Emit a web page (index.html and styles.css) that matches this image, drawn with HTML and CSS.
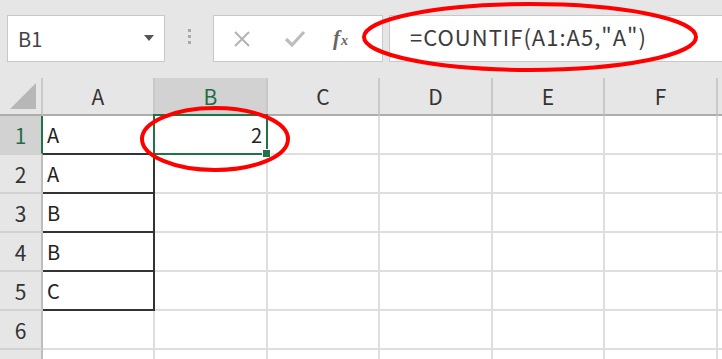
FILE: index.html
```html
<!DOCTYPE html>
<html lang="ja">
<head>
  <meta charset="UTF-8">
  <title>COUNTIF</title>
  <link rel="stylesheet" href="styles.css">
</head>
<body>
  <div class="app">
    <div class="toolbar">
      <div class="namebox">
        <span>B1</span>
        <svg class="caret" width="10" height="6" viewBox="0 0 10 6"><path d="M0 0h10L5 6z" fill="#555"/></svg>
      </div>
      <div class="dots"><i></i><i></i><i></i></div>
      <div class="fxbuttons">
        <svg width="18" height="18" viewBox="0 0 18 18"><path d="M2 2l14 14M16 2L2 16" stroke="#b3b3b3" stroke-width="2" fill="none"/></svg>
        <svg width="22" height="18" viewBox="0 0 22 18"><path d="M2 9l6 6L20 2" stroke="#bdbdbd" stroke-width="3.2" fill="none"/></svg>
        <span class="fx">f<small>x</small></span>
      </div>
      <div class="formula">=COUNTIF(A1:A5,"A")</div>
    </div>

    <div class="sheet">
      <div class="corner"><svg width="26" height="26" viewBox="0 0 26 26"><path d="M26 0v26H0z" fill="#b7b7b7"/></svg></div>
      <div class="colhead">A</div>
      <div class="colhead sel">B</div>
      <div class="colhead">C</div>
      <div class="colhead">D</div>
      <div class="colhead">E</div>
      <div class="colhead">F</div>
      <div class="colhead"></div>

      <div class="rowhead sel">1</div>
      <div class="cell data">A</div>
      <div class="cell active">2<span class="handle"></span></div>
      <div class="cell"></div><div class="cell"></div><div class="cell"></div><div class="cell"></div><div class="cell"></div>

      <div class="rowhead">2</div>
      <div class="cell data">A</div>
      <div class="cell"></div><div class="cell"></div><div class="cell"></div><div class="cell"></div><div class="cell"></div><div class="cell"></div>

      <div class="rowhead">3</div>
      <div class="cell data">B</div>
      <div class="cell"></div><div class="cell"></div><div class="cell"></div><div class="cell"></div><div class="cell"></div><div class="cell"></div>

      <div class="rowhead">4</div>
      <div class="cell data">B</div>
      <div class="cell"></div><div class="cell"></div><div class="cell"></div><div class="cell"></div><div class="cell"></div><div class="cell"></div>

      <div class="rowhead">5</div>
      <div class="cell data">C</div>
      <div class="cell"></div><div class="cell"></div><div class="cell"></div><div class="cell"></div><div class="cell"></div><div class="cell"></div>

      <div class="rowhead">6</div>
      <div class="cell"></div>
      <div class="cell"></div><div class="cell"></div><div class="cell"></div><div class="cell"></div><div class="cell"></div><div class="cell"></div>

      <div class="rowhead"></div>
      <div class="cell"></div>
      <div class="cell"></div><div class="cell"></div><div class="cell"></div><div class="cell"></div><div class="cell"></div><div class="cell"></div>
    </div>

    <!-- red annotation marks -->
    <svg class="marks" width="722" height="359" viewBox="0 0 722 359">
      <ellipse cx="530" cy="37" rx="166" ry="33" fill="none" stroke="#f00" stroke-width="4"/>
      <ellipse cx="215" cy="139" rx="73" ry="31" fill="none" stroke="#f00" stroke-width="4"/>
    </svg>
  </div>
</body>
</html>
```

FILE: styles.css
```css
body {
  margin: 0;
  background: #fff;
  font-family: "Noto Sans CJK JP", "Noto Sans", sans-serif;
  overflow: hidden;
}

.app {
  position: relative;
  width: 722px;
  height: 359px;
  overflow: hidden;
}

.toolbar {
  display: flex;
  align-items: flex-start;
  height: 78px;
  padding: 15px 0 0 7px;
  box-sizing: border-box;
  background: #e6e6e6;
}

.namebox {
  display: flex;
  align-items: center;
  justify-content: space-between;
  width: 158px;
  height: 47px;
  padding: 0 10px 0 10px;
  box-sizing: border-box;
  background: #fff;
  border: 1px solid #c8c8c8;
  color: #444;
  font-size: 20px;
}

.caret {
  margin-top: -2px;
}

.dots {
  display: flex;
  flex-direction: column;
  align-items: center;
  gap: 3px;
  width: 48px;
  padding-top: 14px;
}

.dots i {
  width: 3px;
  height: 3px;
  background: #a8a8a8;
}

.fxbuttons {
  display: flex;
  align-items: center;
  width: 170px;
  height: 47px;
  padding-left: 19px;
  box-sizing: border-box;
  background: #fff;
  border: 1px solid #c8c8c8;
  gap: 33px;
}

.fx {
  margin-left: -6px;
  font-family: "Liberation Serif", serif;
  font-style: italic;
  font-weight: bold;
  font-size: 21px;
  color: #666;
}

.fx small {
  font-size: 14px;
  margin-left: 1px;
}

.formula {
  flex: 1;
  margin-left: 6px;
  margin-right: -10px;
  height: 47px;
  box-sizing: border-box;
  padding: 4px 0 0 20px;
  background: #fff;
  border: 1px solid #c8c8c8;
  color: #3c3c3c;
  font-size: 22px;
  letter-spacing: 1px;
  white-space: nowrap;
}

.sheet {
  display: grid;
  grid-template-columns: 43px 112px 113px 112px 113px 112px 113px 30px;
  grid-template-rows: 38px repeat(7, 39px);
  font-size: 20px;
  color: #222;
}

.corner {
  display: flex;
  align-items: flex-end;
  justify-content: flex-end;
  padding: 0 5px 5px 0;
  background: #e6e6e6;
  border-right: 2px solid #c8c8c8;
  border-bottom: 2px solid #adadad;
}

.colhead {
  display: flex;
  align-items: center;
  justify-content: center;
  background: #e6e6e6;
  border-right: 2px solid #c8c8c8;
  border-bottom: 2px solid #adadad;
  color: #333;
  font-size: 21px;
}

.colhead.sel {
  background: #d2d2d2;
  color: #1f6e43;
  border-bottom-color: #217346;
}

.rowhead {
  display: flex;
  align-items: center;
  justify-content: center;
  background: #e6e6e6;
  border-right: 2px solid #bdbdbd;
  border-bottom: 2px solid #d2d2d2;
  color: #333;
  font-size: 21px;
}

.rowhead.sel {
  background: #d2d2d2;
  color: #1f6e43;
  border-right-color: #217346;
}

.cell {
  display: flex;
  align-items: center;
  padding: 0 4px;
  border-right: 2px solid #dedede;
  border-bottom: 2px solid #dedede;
}

.cell.data {
  border-right-color: #333;
  border-bottom-color: #333;
}

.cell.active {
  position: relative;
  justify-content: flex-end;
  margin: -2px 0 0 -2px;
  border: 2px solid #217346;
}

.handle {
  position: absolute;
  right: -5px;
  bottom: -5px;
  width: 7px;
  height: 7px;
  background: #217346;
  border: 1px solid #fff;
}

.marks {
  position: absolute;
  left: 0;
  top: 0;
  pointer-events: none;
}
```
